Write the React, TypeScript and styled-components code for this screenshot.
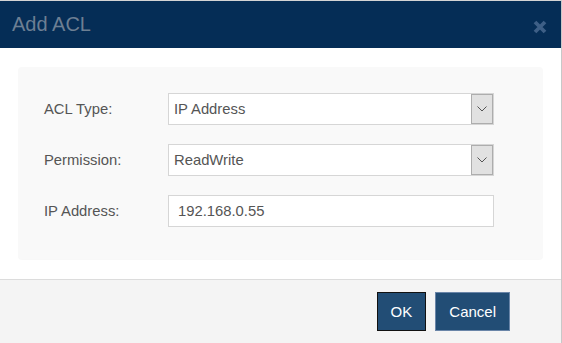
import React from "react";
import styled, { createGlobalStyle } from "styled-components";

const Global = createGlobalStyle`
  html, body { margin: 0; padding: 0; background: #fff; }
  body { font-family: "Liberation Sans", Arial, sans-serif; }
`;

const Dialog = styled.div`
  width: 561px;
  height: 342px;
  border-top: 1px solid #d4d4d4;
  border-right: 1px solid #c8c8c8;
  border-bottom: 1px solid #d0d0d0;
  display: flex;
  flex-direction: column;
  box-sizing: content-box;
`;

const Header = styled.div`
  height: 47px;
  background: #052d56;
  display: flex;
  align-items: center;
  justify-content: space-between;
  padding: 0 14px 0 12px;
`;

const Title = styled.h4`
  margin: 0;
  font-size: 20px;
  font-weight: normal;
  color: #6d7f93;
  line-height: 1;
  padding-bottom: 1px;
`;

const Close = styled.span`
  display: flex;
  color: #3e5f86;
  margin-top: 4px;
`;

const Body = styled.div`
  flex: 1;
  padding: 19px 18px 19px 18px;
  background: #fff;
`;

const Panel = styled.div`
  background: #f9f9f9;
  border-radius: 4px;
  box-shadow: 0 1px 1px rgba(0, 0, 0, 0.03);
  padding: 26px 49px 31px 26px;
  display: flex;
  flex-direction: column;
  gap: 19px;
  height: 192px;
  box-sizing: border-box;
`;

const Row = styled.div`
  display: grid;
  grid-template-columns: 124px 1fr;
  align-items: center;
  height: 32px;
`;

const Label = styled.label`
  font-size: 14.8px;
  color: #555;
`;

const Field = styled.div<{ $pad?: number }>`
  height: 32px;
  box-sizing: border-box;
  border: 1px solid #d6d6d6;
  background: #fff;
  display: flex;
  align-items: center;
  justify-content: space-between;
  font-size: 14.8px;
  color: #555;
  padding-left: ${(p) => p.$pad ?? 5}px;
`;

const Arrow = styled.span`
  width: 22px;
  height: 30px;
  box-sizing: border-box;
  border: 1px solid #adadad;
  background: #e1e1e1;
  display: flex;
  align-items: center;
  justify-content: center;
`;

const Footer = styled.div`
  height: 63px;
  background: #f4f4f4;
  border-top: 1px solid #dcdcdc;
  display: flex;
  justify-content: flex-end;
  align-items: center;
  gap: 9px;
  padding-right: 51px;
`;

const Button = styled.button<{ $focus?: boolean }>`
  height: 39px;
  padding: 0 13px;
  background: #224d75;
  color: #fff;
  font-family: "Liberation Sans", Arial, sans-serif;
  font-size: 15px;
  border: 1px solid ${(p) => (p.$focus ? "#111" : "#6a85a8")};
  border-radius: 0;
  cursor: pointer;
`;

const Chevron = () => (
  <svg width="10" height="6" viewBox="0 0 10 6">
    <path d="M0.5 0.5 L5 5 L9.5 0.5" fill="none" stroke="#444" strokeWidth="0.9" />
  </svg>
);

const Select = ({ value }: { value: string }) => (
  <Field>
    <span>{value}</span>
    <Arrow>
      <Chevron />
    </Arrow>
  </Field>
);

export default function App() {
  return (
    <>
      <Global />
      <Dialog>
        <Header>
          <Title>Add ACL</Title>
          <Close>
            <svg width="14" height="14" viewBox="0 0 14 14">
              <path d="M2 2 L12 12 M12 2 L2 12" stroke="currentColor" strokeWidth="3.8" strokeLinecap="butt" />
            </svg>
          </Close>
        </Header>
        <Body>
          <Panel>
            <Row>
              <Label>ACL Type:</Label>
              <Select value="IP Address" />
            </Row>
            <Row>
              <Label>Permission:</Label>
              <Select value="ReadWrite" />
            </Row>
            <Row>
              <Label>IP Address:</Label>
              <Field $pad={9}>192.168.0.55</Field>
            </Row>
          </Panel>
        </Body>
        <Footer>
          <Button $focus>OK</Button>
          <Button>Cancel</Button>
        </Footer>
      </Dialog>
    </>
  );
}
